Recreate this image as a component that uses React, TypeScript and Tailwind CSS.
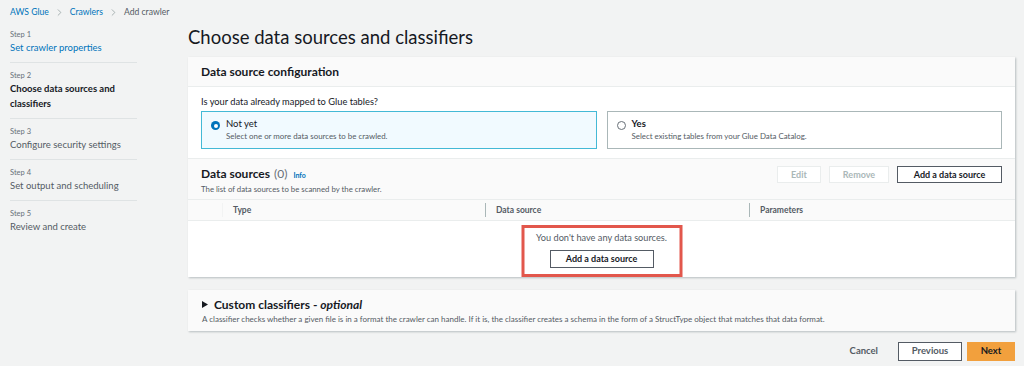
import React from 'react';
import { ChevronRight } from 'lucide-react';

const steps = [
  { label: 'Step 1', title: ['Set crawler properties'], state: 'link' },
  { label: 'Step 2', title: ['Choose data sources and', 'classifiers'], state: 'active' },
  { label: 'Step 3', title: ['Configure security settings'], state: 'idle' },
  { label: 'Step 4', title: ['Set output and scheduling'], state: 'idle' },
  { label: 'Step 5', title: ['Review and create'], state: 'idle' },
];

function Radio({ checked }: { checked: boolean }) {
  return checked ? (
    <span className="mt-[3px] flex h-[9px] w-[9px] shrink-0 items-center justify-center rounded-full bg-[#0073bb]">
      <span className="h-[4px] w-[4px] rounded-full bg-white" />
    </span>
  ) : (
    <span className="mt-[3px] h-[9px] w-[9px] shrink-0 rounded-full border border-[#687078] bg-white" />
  );
}

export default function App() {
  return (
    <div className="flex h-[366px] w-[1024px] flex-col overflow-hidden bg-[#f2f3f3] text-[#16191f] font-['Lato','Liberation_Sans',sans-serif]">
      {/* breadcrumb */}
      <div className="flex h-[25px] shrink-0 items-center gap-[5px] pl-[10px] text-[8.6px]">
        <span className="text-[#0073bb]">AWS Glue</span>
        <ChevronRight className="h-[11px] w-[11px] text-[#879596]" strokeWidth={1.5} />
        <span className="text-[#0073bb]">Crawlers</span>
        <ChevronRight className="h-[11px] w-[11px] text-[#879596]" strokeWidth={1.5} />
        <span className="text-[#545b64]">Add crawler</span>
      </div>

      <div className="flex flex-1">
        {/* wizard steps */}
        <nav className="w-[188px] shrink-0 pl-[10px]">
          <div className="w-[127px]">
            {steps.map((s, i) => (
              <div key={s.label} className={`${i > 0 ? 'border-t border-[#dfe3e4] pt-[7px]' : 'pt-[4px]'} pb-[7px]`}>
                <div className="text-[7.5px] leading-[11px] text-[#687078]">{s.label}</div>
                {s.title.map((t) => (
                  <div
                    key={t}
                    className={`text-[9.5px] leading-[15px] ${
                      s.state === 'link' ? 'text-[#0073bb]' : s.state === 'active' ? 'font-bold text-[#16191f]' : 'text-[#545b64]'
                    }`}
                  >
                    {t}
                  </div>
                ))}
              </div>
            ))}
          </div>
        </nav>

        {/* main column */}
        <main className="flex w-[827px] flex-col">
          <h1 className="text-[18.5px] leading-[24px] text-[#16191f]">Choose data sources and classifiers</h1>

          <section className="mt-[8px] bg-white shadow-[1px_1px_2px_rgba(0,28,36,0.25)]">
            <div className="flex h-[30px] items-center border-b border-[#eaeded] bg-[#fafafa] px-[13px]">
              <h2 className="text-[12px] font-bold">Data source configuration</h2>
            </div>

            <div className="px-[13px] pb-[9px] pt-[9px]">
              <div className="text-[9.3px] leading-[12px]">Is your data already mapped to Glue tables?</div>
              <div className="mt-[3px] grid grid-cols-2 gap-[10px]">
                <div className="flex h-[38px] gap-[6px] border border-[#44b9d6] bg-[#f1faff] px-[9px] pt-[6px]">
                  <Radio checked />
                  <div>
                    <div className="text-[9.5px] leading-[12px]">Not yet</div>
                    <div className="text-[7.9px] leading-[12px] text-[#545b64]">Select one or more data sources to be crawled.</div>
                  </div>
                </div>
                <div className="flex h-[38px] gap-[6px] border border-[#aab7b8] px-[9px] pt-[6px]">
                  <Radio checked={false} />
                  <div>
                    <div className="text-[9.5px] font-bold leading-[12px]">Yes</div>
                    <div className="text-[7.9px] leading-[12px] text-[#545b64]">Select existing tables from your Glue Data Catalog.</div>
                  </div>
                </div>
              </div>
            </div>

            <div className="flex items-start justify-between border-t border-[#eaeded] bg-[#fafafa] px-[13px] pb-[4px] pt-[7px]">
              <div>
                <div className="flex items-baseline gap-[4px] leading-[16px]">
                  <span className="text-[12px] font-bold">Data sources</span>
                  <span className="text-[12px] text-[#687078]">(0)</span>
                  <span className="ml-[2px] text-[7px] font-bold text-[#0073bb]">Info</span>
                </div>
                <div className="text-[7.8px] leading-[12px] text-[#545b64]">The list of data sources to be scanned by the crawler.</div>
              </div>
              <div className="flex gap-[8px] text-[9px] font-bold">
                <button className="h-[17px] w-[44px] border border-[#eaeded] bg-white text-[#aab7b8]">Edit</button>
                <button className="h-[17px] w-[60px] border border-[#eaeded] bg-white text-[#aab7b8]">Remove</button>
                <button className="h-[17px] w-[105px] border border-[#545b64] bg-white text-[#16191f]">Add a data source</button>
              </div>
            </div>

            <div className="flex h-[21px] items-center border-t border-[#eaeded] bg-[#fafafa] text-[8.5px] font-bold text-[#545b64]">
              <div className="h-[14px] w-[35px] border-r border-[#f2f3f3]" />
              <div className="flex h-[14px] w-[263px] items-center border-r border-[#aab7b8] pl-[10px]">Type</div>
              <div className="flex h-[14px] w-[264px] items-center border-r border-[#aab7b8] pl-[10px]">Data source</div>
              <div className="pl-[10px]">Parameters</div>
            </div>

            <div className="relative flex h-[57px] flex-col items-center border-t border-[#eaeded] pt-[11px]">
              <div className="text-[9.2px] leading-[12px] text-[#545b64]">You don't have any data sources.</div>
              <button className="mt-[6px] h-[18px] w-[104px] border border-[#545b64] bg-white text-[9px] font-bold text-[#16191f]">
                Add a data source
              </button>
              <div className="absolute left-1/2 top-[4px] h-[52px] w-[161px] -translate-x-1/2 border-[3px] border-[#e2574c]" />
            </div>
          </section>

          <section className="mt-[13px] flex h-[41px] flex-col justify-center bg-[#fafafa] px-[14px] shadow-[1px_1px_2px_rgba(0,28,36,0.25)]">
            <div className="flex items-center gap-[6px] leading-[16px]">
              <svg width="6" height="7" viewBox="0 0 6 7" className="shrink-0">
                <path d="M0 0 L6 3.5 L0 7 Z" fill="#16191f" />
              </svg>
              <span className="text-[12px] font-bold">
                Custom classifiers - <em>optional</em>
              </span>
            </div>
            <div className="mt-[1px] text-[8px] leading-[11px] text-[#545b64]">
              A classifier checks whether a given file is in a format the crawler can handle. If it is, the classifier creates a schema in the form of a StructType object that matches that data format.
            </div>
          </section>

          <div className="mt-[11px] flex items-center justify-end gap-[5px] text-[9.5px] font-bold">
            <button className="mr-[15px] text-[#545b64]">Cancel</button>
            <button className="h-[19px] w-[64px] border border-[#545b64] bg-white text-[#545b64]">Previous</button>
            <button className="h-[19px] w-[48px] bg-[#f2a03d] text-[#16191f]">Next</button>
          </div>
        </main>
      </div>
    </div>
  );
}
